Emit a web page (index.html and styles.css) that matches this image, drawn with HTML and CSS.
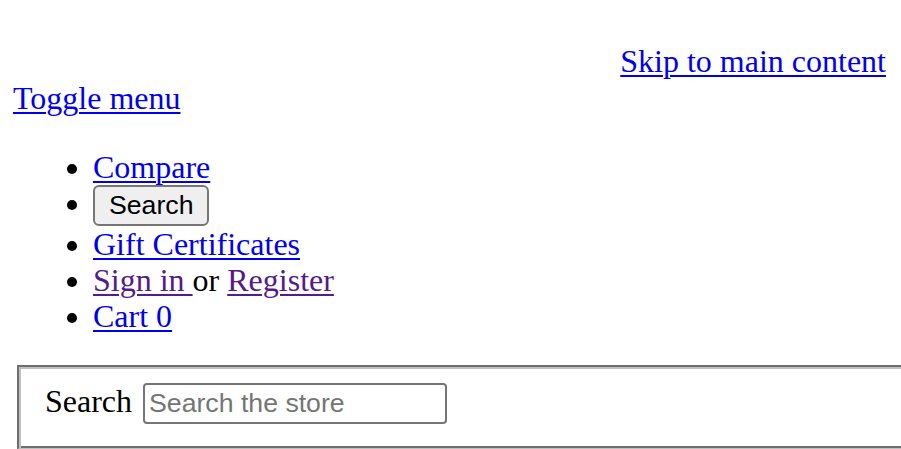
FILE: index.html
```html
<!DOCTYPE html>
<html lang="en">
<head>
<meta charset="utf-8">
<title>Store</title>
<link rel="stylesheet" href="styles.css">
</head>
<body>
<div class="page">
  <header class="header">
    <div class="skip"><a href="#main" class="link">Skip to main content</a></div>
    <a href="#menu" class="link toggle">Toggle menu</a>
    <ul class="nav">
      <li><a href="#compare" class="link">Compare</a></li>
      <li><button type="button" class="btn">Search</button></li>
      <li><a href="#gift" class="link">Gift Certificates</a></li>
      <li><a href="#signin" class="link visited">Sign in </a>or <a href="#register" class="link visited">Register</a></li>
      <li><a href="#cart" class="link">Cart 0</a></li>
    </ul>
  </header>
  <form class="search-form">
    <fieldset class="fs">
      <label class="lbl" for="q">Search</label>
      <input id="q" class="field" type="text" placeholder="Search the store">
    </fieldset>
  </form>
</div>
</body>
</html>
```
FILE: styles.css
```css
html, body {
  margin: 0;
  padding: 0;
  overflow: hidden;
  background: #fff;
}
.page {
  font-family: "Liberation Serif", "Times New Roman", serif;
  font-size: 32px;
  color: #000;
  padding-left: 13px;
  overflow: hidden;
  height: 449px;
}
.link {
  color: #0000ee;
  text-decoration: underline;
  text-decoration-thickness: 2px;
  text-underline-offset: 3px;
}
.link.visited {
  color: #551a8b;
}
.skip {
  padding-top: 43px;
  text-align: right;
  padding-right: 15px;
}
.toggle {
  display: inline-block;
  margin-top: -1px;
}
.nav {
  margin: 32px 0 31px;
  padding-left: 80px;
  list-style: disc;
  line-height: 36px;
}
.btn {
  font-family: "Liberation Sans", Arial, sans-serif;
  font-size: 26.67px;
  line-height: normal;
  color: #000;
  background: #efefef;
  border: 2px solid #767676;
  border-radius: 6px;
  padding: 3px 14px;
  margin: 0;
}
.search-form {
  margin: 0;
}
.fs {
  margin: 0 4px;
  width: 1100px;
  padding: 16px 24px 24px 26px;
  border-style: solid;
  border-width: 2px;
  border-color: #6e6e6e #c0c0c0 #c0c0c0 #6e6e6e;
  box-shadow: inset 2px 2px 0 #c0c0c0, inset -2px -2px 0 #6e6e6e;
}
.lbl {
  margin-right: 3px;
}
.field {
  box-sizing: border-box;
  width: 304px;
  height: 41px;
  font-family: "Liberation Sans", Arial, sans-serif;
  font-size: 26.67px;
  padding: 2px 4px;
  border: 2px solid #767676;
  border-radius: 4px;
  background: #fff;
  vertical-align: baseline;
}
.field::placeholder {
  color: #757575;
}
```
